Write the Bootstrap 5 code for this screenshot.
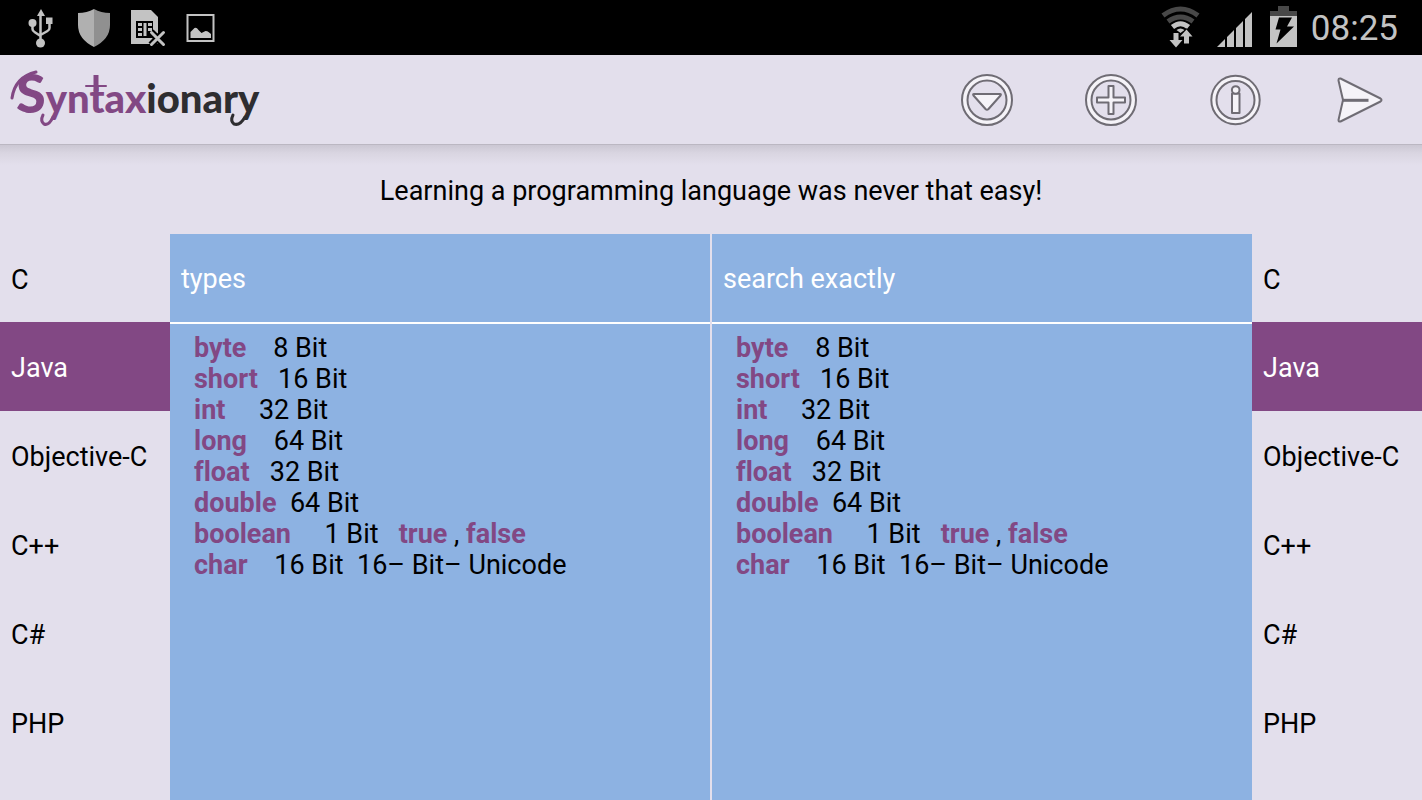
<!DOCTYPE html>
<html lang="en">
<head>
<meta charset="utf-8">
<meta name="viewport" content="width=device-width, initial-scale=1">
<title>Syntaxionary</title>
<link href="https://cdn.jsdelivr.net/npm/bootstrap@5.3.0/dist/css/bootstrap.min.css" rel="stylesheet">
<style>
  :root { --plum: #824884; --lilac: #e3dfec; --sky: #8db2e2; }
  body { font-family: Roboto, "Noto Sans", sans-serif; font-size: 27px; line-height: 31px; color: #000; background: var(--lilac); font-variant-ligatures: none; }
  .status-bar { height: 55px; background: #000; color: #c3c3c3; }
  .clock { font-size: 35px; line-height: 40px; padding-top: 2px; }
  .action-bar { height: 90px; border-bottom: 1px solid #bbb7c2; }
  .action-btn { width: 124px; height: 88px; border: 0; background: none; }
  .brand { padding: 0 0 8px 16px; font-family: Lato, sans-serif; font-weight: 900; font-size: 40px; line-height: 56px; color: #2e2d30; text-decoration: none; }
  .brand-first { color: var(--plum); }
  .brand-cap { font-size: 54px; }
  .brand-swash { left: 8px; top: 4px; }
  .tagline { height: 89px; padding-top: 3px; background: linear-gradient(#cbc7d3, #d9d5e1 8px, var(--lilac) 20px); }
  .lang-list { width: 170px; }
  .lang-list .list-group-item { height: 89px; padding: 3px 11px 0; border: 0; border-radius: 0; background: none; color: #000; }
  .lang-list .list-group-item.active { background: var(--plum); color: #fff; }
  .panels { gap: 2px; }
  .panel { background: var(--sky); }
  .panel-field { height: 90px; padding: 2px 11px 0; border: 0; border-bottom: 2px solid #fff; border-radius: 0; background: none; color: #fff; font-size: 27px; }
  .panel-field:focus { background: none; color: #fff; box-shadow: none; }
  .panel-field::placeholder { color: #fff; opacity: 1; }
  .snippet { padding: 9px 24px; font-family: inherit; font-size: 27px; line-height: 31px; overflow: visible; }
  .snippet b { color: var(--plum); }
</style>
</head>
<body class="d-flex flex-column min-vh-100">

<div class="status-bar d-flex justify-content-between align-items-center">
  <div class="d-flex align-items-center">
    <svg width="240" height="55" fill="#c3c3c3" aria-hidden="true">
      <path d="M41 9l-4 7h8z"/><circle cx="40.500" cy="43" r="4.500"/><circle cx="32.500" cy="23" r="4"/><path d="M46 17.500h6.500V24H46z"/>
      <path d="M40.500 14v27M32.500 24v5q0 2 2 3l6 4M49.500 23v5q0 2-2 3l-7 4" fill="none" stroke="#c3c3c3" stroke-width="2.500"/>
      <path d="M94 9q-7 4-16 4v12q0 14 16 22z" fill="#b0b0b0"/><path d="M94 9q7 4 16 4v12q0 14-16 22z" fill="#909090"/>
      <path d="M131 10h20l7 7v27h-27z"/>
      <path d="M136 21h17v17h-17z" fill="#000"/>
      <path d="M138 23h4v3h-4zM138 28h4v3h-4zM138 33h4v3h-4zM143.500 23h3v13h-3zM148 23h4v3h-4zM148 28h4v3h-4z"/>
      <path d="M151 32l13 13M164 32l-13 13" stroke="#000" stroke-width="7"/>
      <path d="M151.500 32.500l12 12M163.500 32.500l-12 12" stroke="#c3c3c3" stroke-width="3" stroke-linecap="round"/>
      <path d="M187.500 15h26v26h-26z" fill="none" stroke="#c3c3c3" stroke-width="2"/>
      <path d="M190.500 38v-6l4-4q2-1 4 2l3 3 4-2q2 0 3 1l2.500 2V38z"/>
    </svg>
  </div>
  <div class="d-flex align-items-center pe-4">
    <svg width="151" height="55" fill="#c3c3c3" aria-hidden="true">
      <g fill="none" stroke-width="5">
        <path d="M3 15.500q17.500-13 35 0" stroke="#484848"/>
        <path d="M8 21.500q12.500-9 25 0" stroke="#484848"/>
        <path d="M12.500 27q8-6.500 16 0" stroke="#c3c3c3"/>
      </g>
      <path d="M16.500 30q4-3 8 0l-4 3z"/>
      <path d="M13.500 33h5v7h4L16 47.500 9.500 40h4zM24 43.500h5v-7h3.500L26.500 29.500 20 36.500h4z" stroke="#000" stroke-width="1.500" paint-order="stroke"/>
      <path d="M57 47l8-8v8zM67 37l7-7v17h-7zM76 28l7-7v26h-7zM85 19l7-7v35h-7z"/>
      <path d="M118 6h11v5h8v5h-27v-5h8z" fill="#484848"/>
      <path d="M110 16h27v31h-27z"/><path d="M119 17.500h13l-5 9h7l-17.500 17 4-14h-5z" fill="#000"/>
    </svg>
    <span class="clock">08:25</span>
  </div>
</div>

<header class="action-bar d-flex justify-content-between align-items-center">
  <a class="brand position-relative" href="#"><span class="brand-first"><span class="brand-cap">S</span>yntax</span>ionary
    <svg class="brand-swash position-absolute" width="256" height="60" fill="none" stroke-linecap="round" aria-hidden="true">
      <g stroke="#824884">
        <path d="M4 29Q7 8 28 3" stroke-width="3"/>
        <path d="M45 48Q41 57 36 55Q32 52 35 46" stroke-width="3"/>
        <path d="M78 17H98" stroke-width="2"/>
        <path d="M88 6V22" stroke-width="5" stroke-linecap="butt"/>
      </g>
      <path d="M237 48Q232 57 226 55Q222 52 225 46" stroke="#2e2d30" stroke-width="3"/>
    </svg>
  </a>
  <div class="d-flex">
    <button class="action-btn" type="button" aria-label="Choose">
      <svg width="56" height="56" viewBox="0 0 56 56" fill="none" stroke="#6f6c74" stroke-width="2" stroke-linejoin="round">
        <circle cx="27" cy="28" r="22.300" stroke="#f5f3f8" stroke-width="5"/><circle cx="27" cy="28" r="25"/><circle cx="27" cy="28" r="19.500"/>
        <path d="M14 22h26q1.500 0 .5 1.500L28.500 37q-1.500 1.500-3 0L13.500 23.500q-1-1.500.5-1.500z" fill="#f5f3f8"/>
      </svg>
    </button>
    <button class="action-btn" type="button" aria-label="Add">
      <svg width="56" height="56" viewBox="0 0 56 56" fill="none" stroke="#6f6c74" stroke-width="2" stroke-linejoin="round">
        <circle cx="27" cy="28" r="22.300" stroke="#f5f3f8" stroke-width="5"/><circle cx="27" cy="28" r="25"/><circle cx="27" cy="28" r="19.500"/>
        <path d="M24.500 14h5v11.500H41v5H29.500V42h-5V30.500H13v-5h11.500z" fill="#f5f3f8"/>
      </svg>
    </button>
    <button class="action-btn" type="button" aria-label="Info">
      <svg width="56" height="56" viewBox="0 0 56 56" fill="none" stroke="#6f6c74" stroke-width="2" stroke-linejoin="round">
        <circle cx="27.500" cy="28" r="21.800" stroke="#f5f3f8" stroke-width="5"/><circle cx="27.500" cy="28" r="24.200"/><circle cx="27.500" cy="28" r="19"/>
        <path d="M24 21.500h7.500V41H24z" fill="#f5f3f8"/><circle cx="27.700" cy="18" r="3.800" fill="#f5f3f8"/>
      </svg>
    </button>
    <button class="action-btn" type="button" aria-label="Send">
      <svg width="56" height="56" viewBox="0 0 56 56" fill="#f5f3f8" stroke="#6f6c74" stroke-width="2" stroke-linejoin="round">
        <path d="M8.500 6.500L48.500 26.500q2 1.500 0 3L8.500 49.500q-2 .5-2-1.500L11 28 6.500 8.500q0-2.500 2-2z"/><path d="M11 28.300h25.500" stroke-width="3"/>
      </svg>
    </button>
  </div>
</header>

<div class="tagline d-flex justify-content-center align-items-center text-center">Learning a programming language was never that easy!</div>

<main class="d-flex flex-grow-1">
  <nav class="lang-list list-group flex-shrink-0" aria-label="Left language">
    <a class="list-group-item d-flex align-items-center" href="#">C</a>
    <a class="list-group-item d-flex align-items-center active" href="#">Java</a>
    <a class="list-group-item d-flex align-items-center" href="#">Objective-C</a>
    <a class="list-group-item d-flex align-items-center" href="#">C++</a>
    <a class="list-group-item d-flex align-items-center" href="#">C#</a>
    <a class="list-group-item d-flex align-items-center" href="#">PHP</a>
  </nav>
  <div class="panels d-flex flex-grow-1">
    <section class="panel flex-fill">
      <input class="panel-field form-control" type="text" value="types" aria-label="Topic">
<pre class="snippet mb-0"><b>byte</b>    8 Bit
<b>short</b>   16 Bit
<b>int</b>     32 Bit
<b>long</b>    64 Bit
<b>float</b>   32 Bit
<b>double</b>  64 Bit
<b>boolean</b>     1 Bit   <b>true</b> , <b>false</b>
<b>char</b>    16 Bit  16– Bit– Unicode</pre>
    </section>
    <section class="panel flex-fill">
      <input class="panel-field form-control" type="text" placeholder="search exactly" aria-label="Search exactly">
<pre class="snippet mb-0"><b>byte</b>    8 Bit
<b>short</b>   16 Bit
<b>int</b>     32 Bit
<b>long</b>    64 Bit
<b>float</b>   32 Bit
<b>double</b>  64 Bit
<b>boolean</b>     1 Bit   <b>true</b> , <b>false</b>
<b>char</b>    16 Bit  16– Bit– Unicode</pre>
    </section>
  </div>
  <nav class="lang-list list-group flex-shrink-0" aria-label="Right language">
    <a class="list-group-item d-flex align-items-center" href="#">C</a>
    <a class="list-group-item d-flex align-items-center active" href="#">Java</a>
    <a class="list-group-item d-flex align-items-center" href="#">Objective-C</a>
    <a class="list-group-item d-flex align-items-center" href="#">C++</a>
    <a class="list-group-item d-flex align-items-center" href="#">C#</a>
    <a class="list-group-item d-flex align-items-center" href="#">PHP</a>
  </nav>
</main>

<script src="https://cdn.jsdelivr.net/npm/bootstrap@5.3.0/dist/js/bootstrap.bundle.min.js"></script>
</body>
</html>
